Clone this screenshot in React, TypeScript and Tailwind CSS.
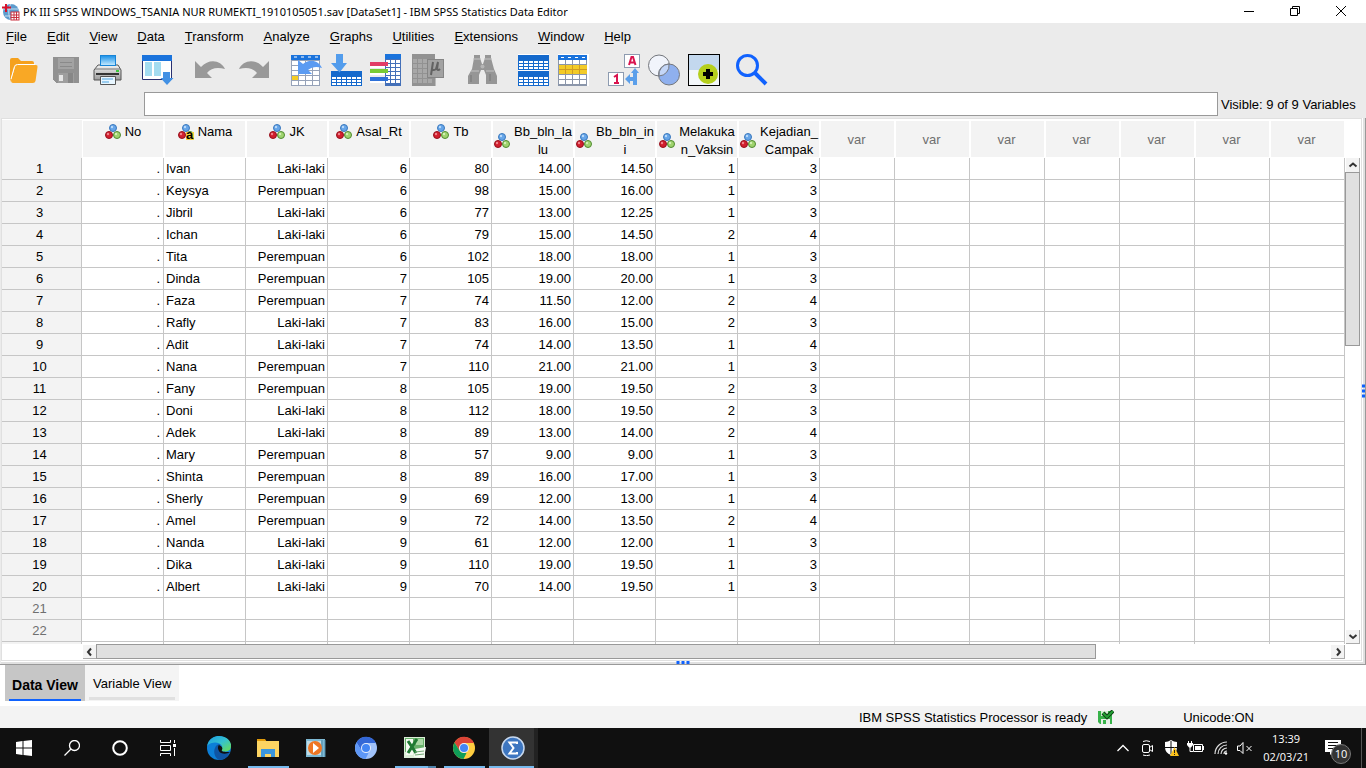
import React from 'react';

type Row = [string, string, number, number, string, string, number, number];

const rows: Row[] = [
  ['Ivan', 'Laki-laki', 6, 80, '14.00', '14.50', 1, 3],
  ['Keysya', 'Perempuan', 6, 98, '15.00', '16.00', 1, 3],
  ['Jibril', 'Laki-laki', 6, 77, '13.00', '12.25', 1, 3],
  ['Ichan', 'Laki-laki', 6, 79, '15.00', '14.50', 2, 4],
  ['Tita', 'Perempuan', 6, 102, '18.00', '18.00', 1, 3],
  ['Dinda', 'Perempuan', 7, 105, '19.00', '20.00', 1, 3],
  ['Faza', 'Perempuan', 7, 74, '11.50', '12.00', 2, 4],
  ['Rafly', 'Laki-laki', 7, 83, '16.00', '15.00', 2, 3],
  ['Adit', 'Laki-laki', 7, 74, '14.00', '13.50', 1, 4],
  ['Nana', 'Perempuan', 7, 110, '21.00', '21.00', 1, 3],
  ['Fany', 'Perempuan', 8, 105, '19.00', '19.50', 2, 3],
  ['Doni', 'Laki-laki', 8, 112, '18.00', '19.50', 2, 3],
  ['Adek', 'Laki-laki', 8, 89, '13.00', '14.00', 2, 4],
  ['Mary', 'Perempuan', 8, 57, '9.00', '9.00', 1, 3],
  ['Shinta', 'Perempuan', 8, 89, '16.00', '17.00', 1, 3],
  ['Sherly', 'Perempuan', 9, 69, '12.00', '13.00', 1, 4],
  ['Amel', 'Perempuan', 9, 72, '14.00', '13.50', 2, 4],
  ['Nanda', 'Laki-laki', 9, 61, '12.00', '12.00', 1, 3],
  ['Dika', 'Laki-laki', 9, 110, '19.00', '19.50', 1, 3],
  ['Albert', 'Laki-laki', 9, 70, '14.00', '19.50', 1, 3],
];

const NUMBERED_ROWS = 22;
const EMPTY_COLS = 7;

const columns = [
  ['No'],
  ['Nama'],
  ['JK'],
  ['Asal_Rt'],
  ['Tb'],
  ['Bb_bln_la', 'lu'],
  ['Bb_bln_in', 'i'],
  ['Melakuka', 'n_Vaksin'],
  ['Kejadian_', 'Campak'],
];

const menus = ['File', 'Edit', 'View', 'Data', 'Transform', 'Analyze', 'Graphs', 'Utilities', 'Extensions', 'Window', 'Help'];

const Icon: React.FC<{ size?: number; crisp?: boolean; children: React.ReactNode }> = ({ size = 32, crisp, children }) => (
  <svg width={size} height={size} viewBox={`0 0 ${size} ${size}`} fill="none" shapeRendering={crisp ? 'crispEdges' : 'auto'} aria-hidden="true">
    {children}
  </svg>
);

// white cells of a small data grid
const Cells: React.FC<{ x: number; y: number; cols: number; rows: number; w: number; h: number; fill?: string }> = ({ x, y, cols, rows: n, w, h, fill = '#fff' }) => (
  <>
    {Array.from({ length: cols * n }, (_, i) => (
      <rect key={i} x={x + (i % cols) * (w + 1)} y={y + Math.floor(i / cols) * (h + 1)} width={w} height={h} fill={fill} />
    ))}
  </>
);

const OpenIcon = () => (
  <Icon>
    <path d="M2 28V6q0-2 2-2h6l3 3h11q2 0 2 2v2H9q-2 0-3 3z" fill="#f5a11e" />
    <path d="M3 26 7 13q.5-2 2.5-2H28q2 0 1.5 2l-2 14q-.5 2-2.5 2H5q-2 0-2-3z" fill="#f9a825" />
    <path d="M3 25 6.5 12.5Q7 10.5 9.5 10.5H27" stroke="#fff" />
  </Icon>
);

const SaveIcon = () => (
  <Icon crisp>
    <path d="M3 3h26v26H6l-3-3z" fill="#919191" />
    <rect x="8" y="4" width="16" height="11" fill="#a3a3a3" />
    <path d="M10 8h12M10 12h12" stroke="#8a8a8a" />
    <rect x="8" y="19" width="16" height="10" fill="#9e9e9e" />
    <rect x="9" y="21" width="4" height="6" fill="#e6e6e6" />
    <rect x="18" y="19" width="5" height="10" fill="#878787" />
  </Icon>
);

const PrintIcon = () => (
  <Icon>
    <defs>
      <linearGradient id="paper" x1="0" y1="0" x2="0" y2="1">
        <stop offset="0" stopColor="#168fe8" />
        <stop offset="1" stopColor="#c9ecff" />
      </linearGradient>
      <linearGradient id="body" x1="0" y1="0" x2="0" y2="1">
        <stop offset="0" stopColor="#f4f4f4" />
        <stop offset="1" stopColor="#9b9b9b" />
      </linearGradient>
    </defs>
    <path d="M6 11h20l3 5v10H2V16z" fill="url(#body)" stroke="#555" />
    <rect x="8.5" y="1.5" width="15" height="10" fill="url(#paper)" stroke="#1884d6" />
    <path d="M3 15h25" stroke="#777" />
    <path d="M4 20h23" stroke="#333" strokeWidth="2" />
    <rect x="24" y="16" width="3" height="2" fill="#3fc93f" />
    <path d="M8.5 22.5h15v8h-15z" fill="#e8f6ff" stroke="#555" />
    <path d="M10 25h11M10 28h7" stroke="#4ca3e0" />
  </Icon>
);

const DialogIcon = () => (
  <Icon>
    <path d="M.5 6v19.5h29V6z" fill="#fff" stroke="#283070" />
    <rect x="0" y="1" width="30" height="6" fill="#1a73dc" />
    <path d="M3 8h7v14H3zM12 8h7v14h-7z" fill="#a3dcf0" />
    <path d="M21 18h7v6h3.5L25 31l-6.5-7H21z" fill="#4291e4" />
  </Icon>
);

const UndoIcon = () => (
  <Icon>
    <path d="M1 7v17h17l-5-5c4-5 10-6 18-4C27 6 15 4 7 13z" fill="#999" />
  </Icon>
);

const RedoIcon = () => (
  <Icon>
    <path d="M31 7v17H14l5-5c-4-5-10-6-18-4C5 6 17 4 25 13z" fill="#999" />
  </Icon>
);

const GotoCaseIcon = () => (
  <Icon>
    <rect x="1" y="1" width="29" height="31" fill="#96a2b8" shapeRendering="crispEdges" />
    <rect x="1" y="1" width="29" height="5" fill="#1a73dc" />
    <path d="M4 3h3M11 3h3M18 3h3M25 3h3" stroke="#fff" />
    <Cells x={2} y={7} cols={4} rows={5} w={6} h={4} />
    <rect x="2" y="22" width="6" height="4" fill="#f4cc25" />
    <path d="M8 6v14h14l-4-4c4-3 8-4 14-2C28 5 18 5 13 10z" fill="#5b9bf2" />
  </Icon>
);

const BlueGrid: React.FC<{ y: number }> = ({ y }) => (
  <g shapeRendering="crispEdges">
    <rect x="0" y={y} width="31" height="15" fill="#1469cc" />
    <Cells x={1} y={y + 6} cols={6} rows={3} w={4} h={2} />
  </g>
);

const GotoVarIcon = () => (
  <Icon>
    <g transform="translate(1 0)">
      <BlueGrid y={17} />
    </g>
    <path d="M6 0h7v9h4l-7.5 9.5L1 9h5z" fill="#529cec" />
  </Icon>
);

const VariablesIcon = () => (
  <Icon crisp>
    <rect x="15" y="0" width="16" height="32" fill="#4470b8" />
    <rect x="15" y="0" width="16" height="5" fill="#1a73dc" />
    <Cells x={16} y={6} cols={3} rows={6} w={4} h={3} />
    <rect x="0" y="8" width="18" height="4" fill="#e23c66" />
    <rect x="0" y="12" width="15" height="2" fill="#fff" />
    <rect x="0" y="15" width="18" height="4" fill="#78cb35" />
    <rect x="0" y="19" width="15" height="2" fill="#fff" />
    <rect x="0" y="23" width="18" height="4" fill="#2d70d8" />
    <rect x="0" y="27" width="15" height="2" fill="#fff" />
  </Icon>
);

const StatsIcon = () => (
  <Icon>
    <g shapeRendering="crispEdges">
      <rect x="0" y="0" width="23" height="32" fill="#929292" />
      <rect x="23" y="23" width="1" height="9" fill="#bbb" />
      <Cells x={1} y={5} cols={4} rows={5} w={4} h={4} fill="#a8a8a8" />
      <rect x="15" y="5" width="16" height="18" fill="#a2a2a2" stroke="#858585" />
    </g>
    <path d="M21 8l-2 13M21 8l-1 7q1 2 4 0l2-7M26 8l-1 7q1 2 3 0" stroke="#626262" strokeWidth="2" />
  </Icon>
);

const FindIcon = () => (
  <Icon>
    <path d="M8 1h6v3l2 6h1l2-6V1h6v3l3 11 3 7v8H20v-9l-2-5h-3l-2 5v9H2v-8l4-7L8 4z" fill="#969696" />
    <path d="M7 5h8M18 5h8M5 17h8M20 17h8" stroke="#c4c4c4" />
    <circle cx="16.5" cy="12.5" r="2" fill="#b5b5b5" />
    <path d="M5 21v7M24 20v7" stroke="#777" />
  </Icon>
);

const SplitIcon = () => (
  <Icon>
    <path d="M0 0h31v32H0z" fill="#fff" />
    <BlueGrid y={1} />
    <BlueGrid y={17} />
  </Icon>
);

const SelectCasesIcon = () => (
  <Icon crisp>
    <rect x="0" y="0" width="31" height="32" fill="#fff" />
    <rect x="0" y="1" width="29" height="31" fill="#8b96aa" />
    <rect x="0" y="1" width="29" height="5" fill="#1a73dc" />
    <path d="M3 3h3M10 3h3M17 3h3M24 3h3" stroke="#fff" />
    <Cells x={1} y={6} cols={4} rows={5} w={6} h={4} />
    <rect x="1" y="11" width="28" height="9" fill="#f3cb28" />
    <path d="M1 15.5h28M7.5 11v9M14.5 11v9M21.5 11v9" stroke="#cf9c21" />
  </Icon>
);

const LabelsIcon = () => (
  <Icon>
    <rect x="16.5" y=".5" width="15" height="13" fill="#fff" stroke="#8d9bb0" />
    <rect x=".5" y="18.5" width="15" height="13" fill="#fff" stroke="#8d9bb0" />
    <path d="m21 11 2.5-8h1.5l2.5 8M22 8.5h5" stroke="#d9144f" strokeWidth="2" />
    <path d="m6 23 3-2v8M6 29h5" stroke="#d9144f" strokeWidth="2" />
    <path d="M17 25l5-5v3h3v-4h-2l4-5 4 5h-2v12h-4v-4h-3v3z" fill="#5b9fea" />
  </Icon>
);

const VennIcon = () => (
  <Icon>
    <circle cx="11" cy="11.5" r="10.5" fill="#f1f4fb" stroke="#74777d" />
    <circle cx="21" cy="20.5" r="10.5" fill="#8fb0ee" stroke="#74777d" />
    <path d="M21 10a10.5 10.5 0 0 1-10 12 10.5 10.5 0 0 1 10-12z" fill="#c4d6f7" stroke="#74777d" />
  </Icon>
);

const AddIcon = () => (
  <Icon>
    <rect width="32" height="16" fill="#c3d8ee" />
    <rect y="16" width="32" height="16" fill="#f3f7fa" />
    <circle cx="20" cy="20" r="10" fill="#b5cf1c" />
    <path d="M15 20h10M20 15v10" stroke="#000" strokeWidth="4" />
    <rect x=".5" y=".5" width="31" height="31" stroke="#000" />
  </Icon>
);

const SearchIcon = () => (
  <Icon>
    <circle cx="11.5" cy="11.5" r="10" stroke="#1162fe" strokeWidth="3" />
    <path d="m18 18 12 12" stroke="#1162fe" strokeWidth="4" />
  </Icon>
);

const toolGroups = [
  {
    className: 'gap-2.5 mr-[18px]',
    tools: [
      { name: 'Open', icon: <OpenIcon /> },
      { name: 'Save', icon: <SaveIcon /> },
      { name: 'Print', icon: <PrintIcon /> },
    ],
  },
  { className: 'mr-5', tools: [{ name: 'Recall dialogs', icon: <DialogIcon /> }] },
  {
    className: 'gap-3 mr-5',
    tools: [
      { name: 'Undo', icon: <UndoIcon /> },
      { name: 'Redo', icon: <RedoIcon /> },
    ],
  },
  {
    className: 'gap-2 mr-2.5',
    tools: [
      { name: 'Go to case', icon: <GotoCaseIcon /> },
      { name: 'Go to variable', icon: <GotoVarIcon /> },
      { name: 'Variables', icon: <VariablesIcon /> },
    ],
  },
  { className: 'mr-[22px]', tools: [{ name: 'Descriptive statistics', icon: <StatsIcon /> }] },
  { className: 'mr-5', tools: [{ name: 'Find', icon: <FindIcon /> }] },
  {
    className: 'gap-2 mr-[18px]',
    tools: [
      { name: 'Split file', icon: <SplitIcon /> },
      { name: 'Select cases', icon: <SelectCasesIcon /> },
    ],
  },
  {
    className: 'gap-2 mr-4',
    tools: [
      { name: 'Value labels', icon: <LabelsIcon /> },
      { name: 'Use sets', icon: <VennIcon /> },
      { name: 'Customize', icon: <AddIcon /> },
    ],
  },
  { className: '', tools: [{ name: 'Search', icon: <SearchIcon /> }] },
];

// nominal measure: three balls, with an "a" badge for string variables
const NominalIcon: React.FC<{ text?: boolean }> = ({ text }) => (
  <span className="relative shrink-0">
    <Icon size={16}>
      <circle cx="8" cy="4" r="3.5" fill="#66a5e8" stroke="#3a78bd" />
      <circle cx="4" cy="11" r="3.5" fill="#d21f2e" stroke="#94101c" />
      <circle cx="12" cy="11" r="3.5" fill="#9fd36e" stroke="#4f8a31" />
      <circle cx="7" cy="3" r="1.2" fill="#b9dafa" />
      <circle cx="3" cy="10" r="1.2" fill="#f0848c" />
      <circle cx="11" cy="10" r="1.2" fill="#d3f0b6" />
    </Icon>
    {text && (
      <span className="absolute right-0 bottom-0 h-2 w-2 bg-[#f6d13c] text-center font-['Liberation_Sans',sans-serif] text-[13px] leading-[6px] font-bold">a</span>
    )}
  </span>
);

const Chevron: React.FC<{ d: string }> = ({ d }) => (
  <Icon size={12}>
    <path d={d} stroke="#333" strokeWidth="2" />
  </Icon>
);

const TitleBar = () => (
  <header className="flex h-[23px] shrink-0 items-center bg-white">
    <div className="flex min-w-0 flex-1 items-center gap-[3px] pl-0.5">
      <Icon size={18}>
        <circle cx="9" cy="9" r="8" fill="#5d9bcd" />
        <path d="M9 1c-3 4-3 12 0 16M2 6h14M3 13h13" stroke="#c4def0" />
        <path d="M4 1v8M0 4.5h9" stroke="#d8112b" strokeWidth="2" />
        <rect x="9" y="9" width="8" height="8" fill="#fff" stroke="#c9303f" />
        <path d="M9 12h8M9 14.5h8M12 9v8M14.5 9v8" stroke="#c9303f" />
      </Icon>
      <h1 className="truncate font-['Noto_Sans',sans-serif] text-[11px] leading-4">
        PK III SPSS WINDOWS_TSANIA NUR RUMEKTI_1910105051.sav [DataSet1] - IBM SPSS Statistics Data Editor
      </h1>
    </div>
    <div className="flex h-full pr-0.5">
      <button aria-label="Minimize" className="flex w-[46px] items-center justify-center">
        <Icon size={12}><path d="M1 5.5h10" stroke="#000" /></Icon>
      </button>
      <button aria-label="Restore" className="flex w-[46px] items-center justify-center">
        <Icon size={12}><path d="M1.5 2.5h7v7h-7zM3.5 2.5v-2h7v7h-2" stroke="#000" /></Icon>
      </button>
      <button aria-label="Close" className="flex w-[46px] items-center justify-center">
        <Icon size={12}><path d="m1 0 10 10M11 0 1 10" stroke="#000" /></Icon>
      </button>
    </div>
  </header>
);

const DataGrid = () => (
  <table className="w-[1343px] table-fixed border-separate border-spacing-0">
    <colgroup>
      <col className="w-20" />
      {columns.map((c) => (
        <col key={c[0]} className="w-[82px]" />
      ))}
      {Array.from({ length: EMPTY_COLS }, (_, i) => (
        <col key={i} className="w-[75px]" />
      ))}
    </colgroup>
    <thead>
      <tr className="h-[38px]">
        <td className="bg-[#f3f3f3]" />
        {columns.map((lines) => (
          <th key={lines[0]} scope="col" className="p-px font-normal">
            <div className="flex h-9 items-start justify-center bg-[#f3f3f3]">
              <div className="flex items-center gap-1 pt-0.5">
                <NominalIcon text={lines[0] === 'Nama'} />
                <span className="leading-[18px]">
                  {lines.map((line) => (
                    <span key={line} className="block">{line}</span>
                  ))}
                </span>
              </div>
            </div>
          </th>
        ))}
        {Array.from({ length: EMPTY_COLS }, (_, i) => (
          <th key={i} scope="col" className="p-px font-normal text-[#6f6f6f]">
            <div className="flex h-9 items-center justify-center bg-[#f3f3f3] pt-0.5 pr-0.5">var</div>
          </th>
        ))}
      </tr>
    </thead>
    <tbody>
      {/* the row after the last numbered one only closes the grid lines */}
      {Array.from({ length: NUMBERED_ROWS + 1 }, (_, r) => {
        const row = rows[r];
        return (
          <tr key={r} className="h-[22px]">
            <th scope="row" className={`border-r border-b border-[#c6c6c6] bg-[#f3f3f3] p-0 pr-1 font-normal ${row ? '' : 'text-[#6f6f6f]'}`}>
              {r < NUMBERED_ROWS ? r + 1 : ''}
            </th>
            <td className="border-r border-b border-[#c6c6c6] p-0 pr-[3px] text-right">{row ? '.' : ''}</td>
            {Array.from({ length: 8 + EMPTY_COLS }, (_, c) => (
              <td key={c} className={`border-r border-b border-[#c6c6c6] px-0.5 py-0 ${c === 0 ? 'text-left' : 'text-right'}`}>
                {row && c < 8 ? row[c] : ''}
              </td>
            ))}
          </tr>
        );
      })}
    </tbody>
  </table>
);

const Dots: React.FC<{ className: string }> = ({ className }) => (
  <div className={`absolute flex gap-0.5 ${className}`}>
    <span className="h-[3px] w-[3px] bg-[#0f62fe]" />
    <span className="h-[3px] w-[3px] bg-[#0f62fe]" />
    <span className="h-[3px] w-[3px] bg-[#0f62fe]" />
  </div>
);

const EdgeIcon = () => (
  <Icon size={24}>
    <defs>
      <linearGradient id="edgeTop" x1="0" y1="0" x2="1" y2="1">
        <stop offset="0" stopColor="#1b9de2" />
        <stop offset=".5" stopColor="#35c1d0" />
        <stop offset="1" stopColor="#6be04b" />
      </linearGradient>
    </defs>
    <circle cx="12" cy="12" r="12" fill="#0c7fd8" />
    <path d="M0 10C2 2 8 0 12 0c8 0 13 6 12 11-1 5-6 5-9 4-2-1 1-2 0-5C13 6 5 5 0 10z" fill="url(#edgeTop)" />
    <path d="M8 12c1-3 3-4 5-4-2 2-2 5 0 7 3 3 7 2 10 1-2 5-6 8-11 8-4-2-6-8-4-12z" fill="#0f55a4" />
    <path d="M12 9c-2 2-1 6 2 8 3 1 6 1 9-1h-3c-4 0-6-1-5-2 1-2 0-4-3-5z" fill="#101010" />
  </Icon>
);

const ExplorerIcon = () => (
  <Icon size={24}>
    <path d="M1 3h8l2 3H1z" fill="#e19b0b" />
    <path d="M1 5h22v16H1z" fill="#fcd462" />
    <path d="M5 13h14v8h-4v-3H9v3H5z" fill="#3a96dd" />
  </Icon>
);

const MediaIcon = () => (
  <Icon size={24}>
    <path d="M1 3h19v18H1z" fill="#7eb9d4" />
    <path d="M2 5h14v14H2z" fill="#c1dce6" />
    <path d="M17 4v17M20 4v17" stroke="#4c88a5" />
    <circle cx="10" cy="12" r="7" fill="#ee7623" />
    <path d="m8 7 6 5-6 5z" fill="#fff" />
  </Icon>
);

const ChromeShape: React.FC<{ top: string; left: string; right: string }> = ({ top, left, right }) => (
  <Icon size={24}>
    <circle cx="12" cy="12" r="11" fill={right} />
    <path d="M2.5 6.5A11 11 0 0 1 22 7H12l-4.5 7.5z" fill={top} />
    <path d="M2.5 6.5l5 8Q9 17 12 17h2.5l-3 6a11 11 0 0 1-9-16.5z" fill={left} />
    <circle cx="12" cy="12" r="5" fill="#e8eefc" />
    <circle cx="12" cy="12" r="4" fill="#4285f4" />
  </Icon>
);

const ExcelIcon = () => (
  <Icon size={24}>
    <path d="M1 1h21v21H1z" fill="#dcedd8" />
    <path d="M2 2h19v10L2 16z" fill="#67b06a" />
    <path d="M3 3h7v16H3zM12 13l11-2-2 11-10-1z" fill="#f5fbf3" />
    <path d="M13 3h7v6h-7z" fill="#a9d8a5" />
    <path d="m5 5 8 12M14 3 5 17" stroke="#1f7a33" strokeWidth="3" />
    <path d="m12 16 9-1M12 19l9-1" stroke="#72a875" />
  </Icon>
);

const SigmaIcon = () => (
  <Icon size={24}>
    <circle cx="12" cy="12" r="11" fill="#3d76c0" stroke="#c8d9ef" strokeWidth="1.5" />
    <path d="M16 8V6.5H8.5l4 5.5-4 5.5H16V16" stroke="#fff" strokeWidth="2" />
  </Icon>
);

const apps = [
  { name: 'Edge', icon: <EdgeIcon />, bar: '' },
  { name: 'File Explorer', icon: <ExplorerIcon />, bar: 'bg-[#76b9ed]' },
  { name: 'Media Player', icon: <MediaIcon />, bar: '' },
  { name: 'Chromium', icon: <ChromeShape top="#3367d6" left="#5e97f6" right="#a1c2fa" />, bar: '' },
  { name: 'Excel', icon: <ExcelIcon />, bar: 'bg-[#76b9ed] border-r-8 border-[#4f83ab]' },
  { name: 'Chrome', icon: <ChromeShape top="#db4437" left="#0f9d58" right="#ffcd40" />, bar: 'bg-[#76b9ed]' },
];

const Taskbar = () => (
  <footer className="flex h-10 shrink-0 items-stretch bg-[#101010] text-white">
    <div className="mr-[3px] flex">
      <button aria-label="Start" className="flex w-12 items-center justify-center">
        <Icon size={16}><path d="m0 2 6.5-1v6.5H0zM7.5 1 16 0v7.5H7.5zM0 8.5h6.5V15L0 14zM7.5 8.5H16V16l-8.5-1z" fill="#fff" /></Icon>
      </button>
      <button aria-label="Search" className="flex w-12 items-center justify-center">
        <Icon size={16}>
          <circle cx="10.5" cy="5.5" r="5" stroke="#fff" strokeWidth="1.3" />
          <path d="M7 9 .5 15.5" stroke="#fff" strokeWidth="1.3" />
        </Icon>
      </button>
      <button aria-label="Cortana" className="flex w-12 items-center justify-center">
        <Icon size={16}><circle cx="8" cy="8" r="6.8" stroke="#fff" strokeWidth="2" /></Icon>
      </button>
      <button aria-label="Task View" className="flex w-12 items-center justify-center">
        <Icon size={16}>
          <path d="M.5 0v2.5h10V0M.5 16v-2.5h10V16M.5 5.5h10v5H.5zM14.5 0v3M14.5 8v8" stroke="#fff" />
          <rect x="13" y="4" width="3" height="3" fill="#fff" />
        </Icon>
      </button>
    </div>
    {apps.map((app) => (
      <button key={app.name} aria-label={app.name} className="relative flex w-[49px] items-center justify-center pr-0.5">
        {app.icon}
        {app.bar && <span className={`absolute inset-x-1 bottom-0 h-0.5 ${app.bar}`} />}
      </button>
    ))}
    <button aria-label="SPSS Statistics" className="relative flex w-[49px] items-center justify-center border-r-4 border-[#222] bg-[#333] pl-0.5">
      <SigmaIcon />
      <span className="absolute inset-x-0 bottom-0 h-0.5 bg-[#76b9ed]" />
    </button>

    <div className="ml-auto flex items-center">
      <div className="flex items-center gap-2">
        <Icon size={16}><path d="m2.5 11 5.5-5.5 5.5 5.5" stroke="#fff" strokeWidth="1.3" /></Icon>
        <Icon size={16}>
          <rect x="3.5" y="4.5" width="7" height="8" rx="1.5" stroke="#fff" />
          <path d="m10.5 7.5 3-2v6l-3-2M4 1.5q3-1.5 7 0M4 15q3 1.5 7 0" stroke="#fff" />
        </Icon>
        <Icon size={16}>
          <path d="M8 0q3 2 6 2v5q0 6-6 8-6-2-6-8V2q3 0 6-2z" fill="#fff" />
          <path d="M8 1v13M2 7.5h12" stroke="#101010" />
          <path d="m11.5 7 4.5 9H7z" fill="#fcc21b" />
          <path d="M11.5 10v3M11.5 14v1" stroke="#222" />
        </Icon>
        <Icon size={18}>
          <path d="M6.5 5.5h9v7h-9z" stroke="#fff" />
          <path d="M8 7h6v4H8zM16 7h1v4h-1z" fill="#fff" />
          <path d="M1.5 2v3M4.5 2v3M3 8v4.5h3" stroke="#fff" />
          <path d="M0 4h6v2L4 8.5H2L0 6z" fill="#fff" />
        </Icon>
        <Icon size={16}>
          <path d="M2 14A12 12 0 0 1 14 2M5 14a9 9 0 0 1 9-9M8 14a6 6 0 0 1 6-6M11 14a3 3 0 0 1 3-3" stroke="#ddd" strokeWidth="1.2" />
          <circle cx="13" cy="13.5" r="1.2" fill="#fff" />
        </Icon>
        <Icon size={16}>
          <path d="M.5 6v4.5H3l3 3v-11L3 6zM9.5 6l5 5M14.5 6l-5 5" stroke="#fff" />
        </Icon>
      </div>
      <time className="mr-4 ml-2.5 text-center font-['Open_Sans',sans-serif] text-[11px] leading-[18px]">
        <span className="block">13:39</span>
        <span className="block">02/03/21</span>
      </time>
      <button aria-label="Notifications" className="relative mr-1 flex h-8 w-8 items-center">
        <Icon size={32}>
          <path d="M0 8h16v12H8l-3 3v-3H0z" fill="#fff" />
          <path d="M3 10.5h10M3 13.5h10M3 16.5h7" stroke="#101010" />
        </Icon>
        <span className="absolute top-3 left-1.5 flex h-5 w-5 items-center justify-center rounded-full border border-[#777] bg-[#333] font-['Open_Sans',sans-serif] text-[11px] leading-4">
          10
        </span>
      </button>
      <div className="mr-1 h-10 w-px bg-[#555]" />
    </div>
  </footer>
);

export default function App() {
  return (
    <div className="flex h-screen flex-col overflow-hidden bg-white font-['Liberation_Sans',Arial,sans-serif] text-[13px] leading-4 text-black">
      <TitleBar />

      <div className="shrink-0 bg-[#ebebeb]">
        <nav className="flex h-[27px] items-center gap-5 pl-1.5">
          {menus.map((m) => (
            <button key={m}>
              <span className="underline underline-offset-2">{m[0]}</span>
              {m.slice(1)}
            </button>
          ))}
        </nav>
        <div className="flex h-10 items-center pl-2">
          {toolGroups.map((group, i) => (
            <div key={i} className={`flex ${group.className}`}>
              {group.tools.map((tool) => (
                <button key={tool.name} aria-label={tool.name}>{tool.icon}</button>
              ))}
            </div>
          ))}
        </div>
        <div className="flex h-7 items-start gap-[3px] pt-0.5 pr-2 pl-36">
          <input aria-label="Cell value" className="h-6 min-w-0 flex-1 border border-[#999] bg-white px-1 outline-none" />
          <span className="w-[137px] pt-px leading-6">Visible: 9 of 9 Variables</span>
        </div>
      </div>

      <main className="relative flex min-h-0 flex-1 border-r border-b border-[#999] bg-[#ebebeb] pl-px">
        <div className="flex min-w-0 flex-1 border-r-2 border-b-2 border-[#e0e0e0] bg-white pr-px pb-px">
          <div className="flex min-w-0 flex-1 flex-col border border-[#e0e0e0] pt-px">
            <div className="flex min-h-0 flex-1">
              <div className="min-w-0 flex-1 overflow-hidden">
                <DataGrid />
              </div>
              <div className="flex w-4 shrink-0 flex-col pt-[38px] pr-px">
                <button aria-label="Scroll up" className="ml-px flex h-3.5 items-center justify-center border-r border-[#aaa] bg-[#f3f3f3]">
                  <Chevron d="m2.5 7.5 3.5-3 3.5 3" />
                </button>
                <div className="min-h-0 flex-1">
                  <div className="h-[38%] border border-[#999] bg-[#e0e0e0]" />
                </div>
                <button aria-label="Scroll down" className="ml-px flex h-3.5 items-center justify-center border-r border-b border-[#aaa] bg-[#f3f3f3]">
                  <Chevron d="m2.5 4 3.5 3 3.5-3" />
                </button>
              </div>
            </div>
            <div className="flex h-4 shrink-0 pr-4 pb-px pl-[81px]">
              <button aria-label="Scroll left" className="mt-px flex w-[13px] items-center justify-center border-b border-[#aaa] bg-[#f3f3f3]">
                <Chevron d="m7 2.5-3 3.5 3 3.5" />
              </button>
              <div className="min-w-0 flex-1">
                <div className="h-full w-[81%] border border-[#999] bg-[#e0e0e0]" />
              </div>
              <button aria-label="Scroll right" className="mt-px flex w-3.5 items-center justify-center border-r border-b border-[#aaa] bg-[#f3f3f3]">
                <Chevron d="m5 2.5 3 3.5-3 3.5" />
              </button>
            </div>
          </div>
        </div>
        <Dots className="bottom-0 left-1/2 -translate-x-1/2" />
        <Dots className="top-1/2 right-0 -translate-y-1/2 flex-col" />
      </main>

      <div className="flex h-[41px] shrink-0 items-start pl-[5px]">
        <button className="flex h-9 w-20 flex-col items-center justify-between bg-[#c6c6c6] px-1 pt-3 text-sm leading-4 font-bold whitespace-nowrap">
          <span>Data View</span>
          <span className="h-0.5 w-full bg-[#0f62fe]" />
        </button>
        <button className="flex h-9 flex-col justify-between bg-[#f4f4f4] px-1 pt-[11px] pb-px">
          <span className="px-1">Variable View</span>
          <span className="h-[3px] w-full bg-[#e0e0e0]" />
        </button>
      </div>

      <div className="flex h-[22px] shrink-0 items-center justify-end bg-[#f3f3f3] pt-px pr-28">
        <span>IBM SPSS Statistics Processor is ready</span>
        <span className="mr-[69px] ml-[11px]">
          <Icon size={16}>
            <path d="M0 1h14v13H2l-2-2z" fill="#37b34a" />
            <path d="M3 1h7v5H3z" fill="#d5efd5" />
            <path d="M3 9h9v5H3z" fill="#e8efe8" />
            <path d="M5 10h3v4H5z" fill="#37b34a" />
            <path d="m5 3 4 4 6-6" stroke="#0d3d14" strokeWidth="4" />
            <path d="m5 3 4 4 6-6" stroke="#23a035" strokeWidth="2" />
          </Icon>
        </span>
        <span>Unicode:ON</span>
      </div>

      <Taskbar />
    </div>
  );
}
